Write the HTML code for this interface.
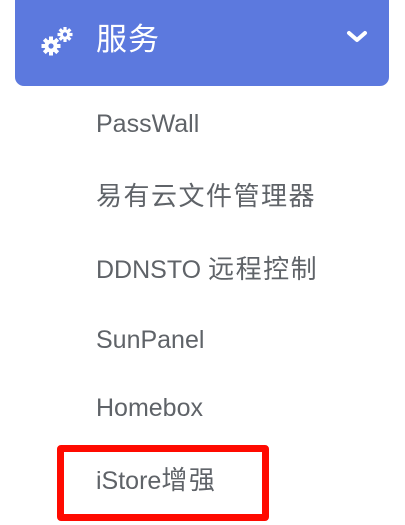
<!DOCTYPE html>
<html><head><meta charset="utf-8"><style>
html,body{margin:0;padding:0;background:#fff;width:405px;height:525px;overflow:hidden;position:relative;font-family:"Liberation Sans","Noto Sans CJK SC",sans-serif;}
.hd{position:absolute;left:15px;top:-10px;width:374px;height:96px;background:#5c79de;border-radius:9px;}
.hd .t{position:absolute;left:81px;top:30px;color:#fff;font-size:31px;line-height:40px;letter-spacing:1px;}
.it{position:absolute;left:96px;color:#5f6368;font-size:25px;line-height:30px;white-space:nowrap;}
.cj{font-size:26px;letter-spacing:1.5px;}
.box{position:absolute;left:57px;top:445px;width:198px;height:62px;border:7px solid #ff0a00;border-radius:4px;}
</style></head><body>
<div class="hd"><div class="t">服务</div>
<svg style="position:absolute;left:25px;top:35px" width="36" height="32" viewBox="0 0 36 32">
<g fill="#fff">
<circle cx="11" cy="21" r="6.5"/><circle cx="25" cy="9.5" r="5"/>
<g transform="translate(11 21)"><rect x="-2" y="-9.5" width="4" height="19"/><rect x="-9.5" y="-2" width="19" height="4"/><rect x="-2" y="-9.5" width="4" height="19" transform="rotate(45)"/><rect x="-2" y="-9.5" width="4" height="19" transform="rotate(-45)"/></g>
<g transform="translate(25 9.5)"><rect x="-1.6" y="-7.5" width="3.2" height="15"/><rect x="-7.5" y="-1.6" width="15" height="3.2"/><rect x="-1.6" y="-7.5" width="3.2" height="15" transform="rotate(45)"/><rect x="-1.6" y="-7.5" width="3.2" height="15" transform="rotate(-45)"/></g>
</g>
<circle cx="11" cy="21" r="2.6" fill="#5c79de"/><circle cx="25" cy="9.5" r="2.1" fill="#5c79de"/>
</svg>
<svg style="position:absolute;left:331px;top:39px" width="22" height="16" viewBox="0 0 22 16"><path d="M3 4 L11 11 L19 4" stroke="#fff" stroke-width="4" fill="none" stroke-linecap="round" stroke-linejoin="round"/></svg>
</div>
<div class="it" style="top:109px">PassWall</div>
<div class="it cj" style="top:181px">易有云文件管理器</div>
<div class="it" style="top:254px">DDNSTO <span class="cj">远程控制</span></div>
<div class="it" style="top:325px">SunPanel</div>
<div class="it" style="top:393px">Homebox</div>
<div class="it" style="top:465px">iStore<span class="cj">增强</span></div>
<div class="box"></div>
</body></html>
